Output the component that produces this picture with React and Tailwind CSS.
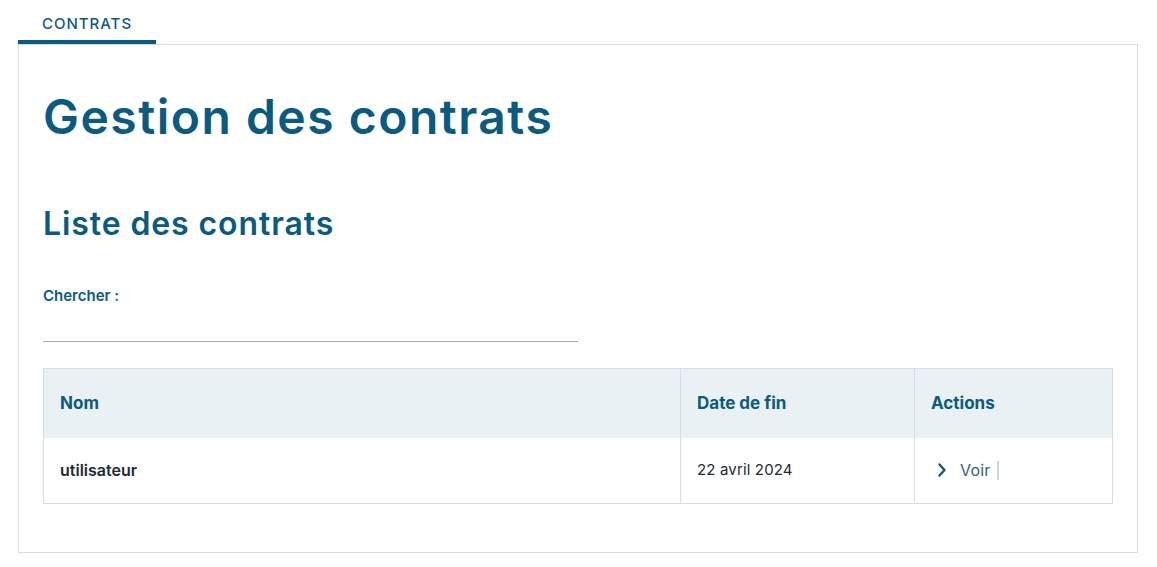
const heading = { fontFamily: 'Inter, "Noto Sans", sans-serif' }

const Chevron = () => (
  <svg width="10" height="16" viewBox="0 0 10 16" fill="none" className="shrink-0">
    <path d="M2.5 2.5 L7.5 8 L2.5 13.5" stroke="#0b5a7f" strokeWidth="2.4" strokeLinecap="round" strokeLinejoin="round" />
  </svg>
)

const ContractRow = ({ contract }) => (
  <tr className="h-[66px] text-[#1f2933]">
    <td className="border-r border-[#d3dee9] px-4 text-[16px] font-semibold">{contract.name}</td>
    <td className="border-r border-[#d3dee9] px-4 text-[15px] tracking-[0.15px]">{contract.endDate}</td>
    <td className="pl-[22px]">
      <a href="#" className="flex items-center text-[#31607f]">
        <Chevron />
        <span className="ml-[13px] text-[16px] tracking-[0.2px]">Voir</span>
        <span className="ml-[6px] h-[19px] w-[2px] bg-[#c9d6e3]" />
      </a>
    </td>
  </tr>
)

export default function App() {
  const contracts = [{ name: 'utilisateur', endDate: '22 avril 2024' }]

  return (
    <div className="min-h-[567px] bg-white pl-[18px] pr-[19px] pt-[10px]" style={{ fontFamily: 'Inter, "Noto Sans", sans-serif' }}>
      <div className="flex">
        <div
          className="w-[138px] border-b-4 border-[#0b5a7f] pb-[5px] pt-[3px] text-center text-[15px] font-medium leading-[22px] tracking-[1px] text-[#0b5a7f]"
          style={heading}
        >
          CONTRATS
        </div>
      </div>

      <section className="border border-[#d5dfe9] px-[24px] pb-[48px] pt-[40px]">
        <h1 className="text-[48px] font-semibold leading-[64px] tracking-[1.5px] text-[#0b5a7f]" style={heading}>
          Gestion des contrats
        </h1>

        <h2 className="mt-[55px] text-[32px] font-semibold leading-[40px] tracking-[0.9px] text-[#0b5a7f]" style={heading}>
          Liste des contrats
        </h2>

        <label className="mt-[42px] block text-[15px] font-semibold leading-[20px] text-[#0b5a7f]">Chercher :</label>
        <input
          type="text"
          className="block h-[36px] w-[535px] border-b border-[#9fabb7] bg-transparent outline-none"
        />

        <table className="mt-[26px] w-full border-collapse border border-[#d3dee9]">
          <thead>
            <tr className="h-[69px] bg-[#e9f1f5] text-left text-[17px] font-bold text-[#0b5a7f]">
              <th className="w-[637px] border-r border-[#d3dee9] px-4">Nom</th>
              <th className="w-[234px] border-r border-[#d3dee9] px-4">Date de fin</th>
              <th className="px-4">Actions</th>
            </tr>
          </thead>
          <tbody>
            {contracts.map((c) => (
              <ContractRow key={c.name} contract={c} />
            ))}
          </tbody>
        </table>
      </section>
    </div>
  )
}
